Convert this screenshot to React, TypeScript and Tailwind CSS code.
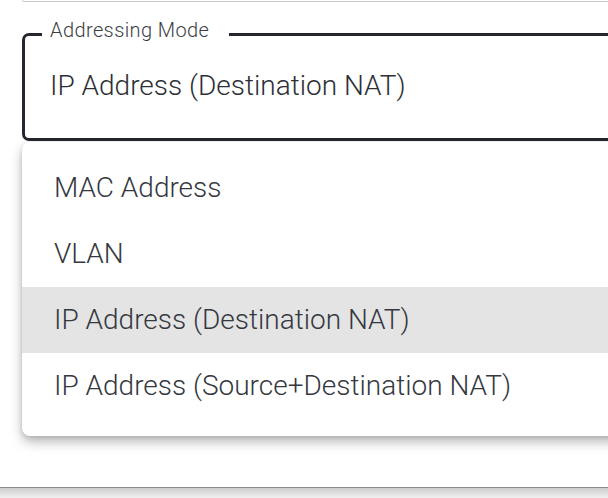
import React from "react";

const options = [
    "MAC Address",
    "VLAN",
    "IP Address (Destination NAT)",
    "IP Address (Source+Destination NAT)",
];

const selected = "IP Address (Destination NAT)";

export default function App() {
    return (
        <div
            className="w-[608px] h-[498px] bg-white overflow-hidden flex flex-col"
            style={{ fontFamily: "Roboto, 'Liberation Sans', sans-serif" }}
        >
            {/* bottom edge of the field above */}
            <div className="ml-[22px] h-[2px] shrink-0 border-b border-l border-[#c9c9c9] rounded-bl-[6px]" />

            <fieldset className="mt-[16px] ml-[22px] w-[660px] shrink-0 border-[3px] border-[#25272e] rounded-[7px] pb-[16px]">
                <legend className="ml-[17px] pl-[8px] pr-[20px] pb-[8px] text-[20px] tracking-[0.4px] leading-[24px] font-light text-[#3b3e45]">
                    Addressing Mode
                </legend>
                <div className="h-[72px] flex items-center pl-[25px] text-[28px] font-light text-[#2c2f36]">
                    {selected}
                </div>
            </fieldset>

            <ul className="mt-[1px] ml-[22px] w-[660px] shrink-0 bg-white rounded-[8px] pt-[13px] pb-[17px] shadow-[0_6px_12px_rgba(0,0,0,0.28),0_1px_4px_rgba(0,0,0,0.12)]">
                {options.map((opt) => (
                    <li
                        key={opt}
                        className={`h-[66px] flex items-center pl-[32px] text-[28px] font-light text-[#35383f] ${
                            opt === selected ? "bg-[#e4e4e4]" : ""
                        }`}
                    >
                        {opt}
                    </li>
                ))}
            </ul>

            <div className="flex-1" />
            <div className="h-[11px] shrink-0 border-t border-[#8c8c8c] bg-linear-to-b from-[#cdcdcd] to-[#f2f2f2]" />
        </div>
    );
}
